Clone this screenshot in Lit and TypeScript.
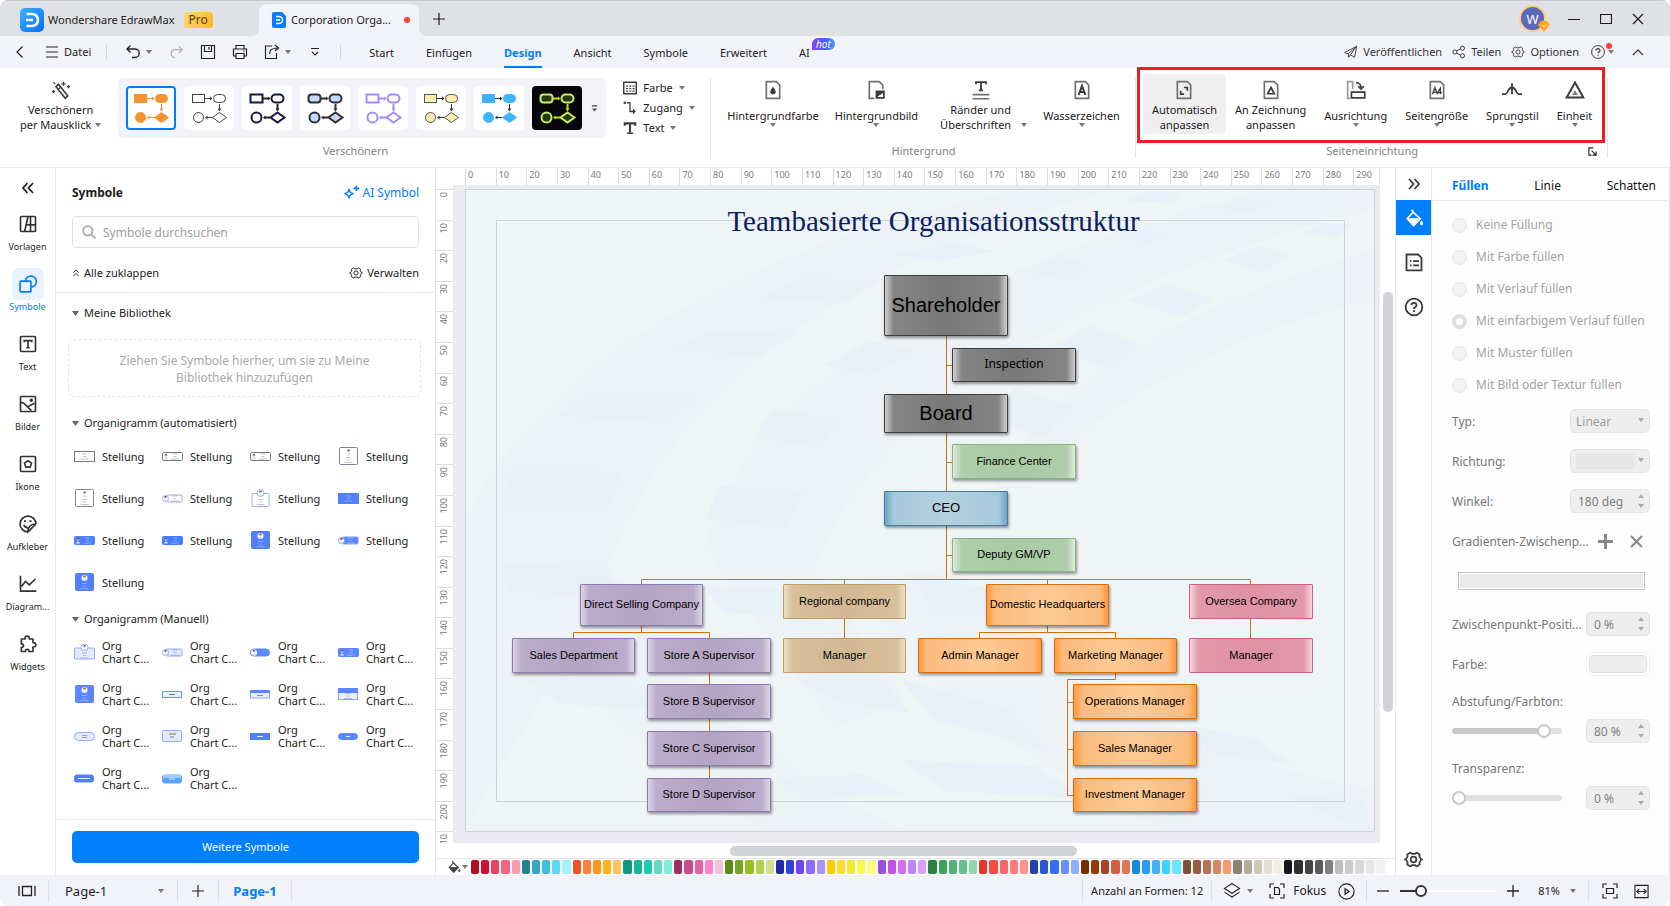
import { LitElement, html, svg, css, nothing, TemplateResult } from "lit";
import { customElement, state } from "lit/decorators.js";
import { classMap } from "lit/directives/class-map.js";
import { styleMap } from "lit/directives/style-map.js";

type Part = TemplateResult<2>;

/** Line icon on a 24-unit grid unless another box is given. */
const icon = (size: number, body: Part, box = "0 0 24 24", extra = "") => html`
  <svg class="ico ${extra}" width=${size} height=${size} viewBox=${box} fill="none" stroke="currentColor" stroke-width="1.6" aria-hidden="true">${body}</svg>
`;
const caret = () => html`<svg class="caret" width="6" height="4" viewBox="0 0 6 4" aria-hidden="true"><path d="M0 0h6L3 4z" fill="currentColor" /></svg>`;

const gear = svg`<path d="M8.200 3.200 10 4.900h4l1.800-1.700 4.100 2.400-.5 2.500 2 3.400 1.600.5-1.600.5-2 3.400.5 2.500-4.100 2.400-1.800-1.700h-4l-1.800 1.700-4.100-2.400.5-2.500-2-3.400L1 12l1.600-.5 2-3.400-.5-2.500z" stroke-linejoin="round"/><circle cx="12" cy="12" r="3.600"/>`;
const page = svg`<path d="M4 2h12l4 4v16H4z" stroke="#707070" stroke-width="2"/>`;
const bucket = svg`<path d="M4 12.500 11 5l8.500 8L11.500 21z" fill="none" stroke-width="2"/><path d="M4 13h15l-7.500 8z" fill="currentColor"/><path d="M9 2l3 4" stroke-width="2"/><path d="M21 16c1.500 2 1.500 3.500 0 4-1.500-.5-1.500-2 0-4z" fill="currentColor"/>`;

const RAIL: { label: string; body: Part }[] = [
  { label: "Vorlagen", body: svg`<rect x="3" y="3" width="18" height="18" rx="1"/><path d="M12 3 8 21M11 13h10M15 3v18" />` },
  { label: "Symbole", body: svg`<rect x="2.500" y="8.500" width="13" height="13" rx="1"/><path d="M9 8.500a6.500 6.500 0 1 1 7 7"/>` },
  { label: "Text", body: svg`<rect x="3" y="3" width="18" height="18" rx="1"/><path d="M7.500 10V8h9v2M12 8v8M10 16.500h4"/>` },
  { label: "Bilder", body: svg`<rect x="3" y="3" width="18" height="18" rx="1"/><path d="m3 10 4 1 9 9M12 15l8-4"/><circle cx="16" cy="7.500" r="1" fill="currentColor"/>` },
  { label: "Ikone", body: svg`<rect x="3" y="3" width="18" height="18" rx="1"/><path d="m12 8 4.200 3-1.600 4.800H9.400L7.800 11z"/>` },
  { label: "Aufkleber", body: svg`<path d="M21.500 12A9.500 9.500 0 1 0 12 21.500M21.500 12 12 21.500c-.5-5 3-10 9.500-9.500M7 13c1 2.500 3 3.500 5 3.500"/><path d="M8.500 7.500v2M15 7.500v2" stroke-width="2.400"/>` },
  { label: "Diagram...", body: svg`<path d="M3 2v18.500h19M4 15l5-6 4.500 4L21 6"/>` },
  { label: "Widgets", body: svg`<path d="M4 6h4.500c-1-4.500 6-4.500 5 0H18v4.500c4.500-1 4.500 6 0 5V21h-5c.8-3.500-4.800-3.500-4 0H4v-5c3.500.8 3.500-4.800 0-4z" stroke-linejoin="round"/>` },
];

/** Ribbon looks of the one-click themes. */
const THEMES = [
  { line: "#f7932e", fill: "#f7932e", arrow: "#f7932e", w: 1, bg: "#fff" },
  { line: "#444", fill: "#fff", arrow: "#444", w: 1, bg: "#fff" },
  { line: "#141a45", fill: "#fff", arrow: "#222", w: 2, bg: "#fff" },
  { line: "#2d3035", fill: "#c5d8fb", arrow: "#2d3035", w: 2, bg: "#fff" },
  { line: "#a48bff", fill: "#fff", arrow: "#a48bff", w: 2, bg: "#fff" },
  { line: "#555", fill: "#fdeeb0", arrow: "#333", w: 1, bg: "#fff" },
  { line: "#3db4ff", fill: "#3db4ff", arrow: "#333", w: 1, bg: "#fff" },
  { line: "#c5ea6f", fill: "#26380a", arrow: "#b6e800", w: 2, bg: "#080509" },
];

const SWATCHES = (
  "b10f1f ce0f35 e8425f f4647f f89cae 26828f 35a8c0 40bfdd 5cd9f0 a4f1ff f15223 ff7f37 ff941b ffb514 ffc459 " +
  "11967f 17b59a 1bccb0 66d8c6 82ecdb 9c2f62 c64c8d e164a8 f985c8 f1c0da 5c8a14 76a329 98be21 b1d14a d0e08e " +
  "1f2aa6 3242d9 6e44f2 8f6cf7 ad90f7 fccb00 fcdc2c f1ea2f fbf64a fdfd7f 994fd9 c44fe3 d270f6 be85fb d89ffd " +
  "2e8044 3aa355 53b077 67c08b 92d7ac e8352b fc4a3f fb6365 ff7b7b ff9289 2442a6 2d57d2 356cf5 668ffc 8ab0f6 " +
  "752e00 933a03 a84327 d16143 e27555 178adb 2a9cf6 41b2ff 3dd2ff 6be6ff 7c5037 965f43 b87253 d78862 f7996c " +
  "8b8074 b3ac9a cdcab8 e4dece f4efdb 151515 303030 444444 5b5b5b 7f7f7f bdbdbd cbcbcb d9d9d9 e6e6e6 f2f2f2 ffffff"
).split(" ");

type Tone = "gray" | "green" | "blue" | "violet" | "tan" | "orange" | "pink";
interface ChartNode { t: string; x: number; y: number; w: number; h: number; tone: Tone; size?: string }
const NODES: ChartNode[] = [
  { t: "Shareholder", x: 419, y: 86, w: 124, h: 61, tone: "gray", size: "big" },
  { t: "Inspection", x: 487, y: 159, w: 124, h: 34, tone: "gray", size: "ui" },
  { t: "Board", x: 419, y: 205, w: 124, h: 39, tone: "gray", size: "big" },
  { t: "Finance Center", x: 487, y: 255, w: 124, h: 35, tone: "green" },
  { t: "CEO", x: 419, y: 302, w: 124, h: 35, tone: "blue", size: "mid" },
  { t: "Deputy GM/VP", x: 487, y: 349, w: 124, h: 34, tone: "green" },
  { t: "Direct Selling Company", x: 115, y: 395, w: 123, h: 42, tone: "violet" },
  { t: "Sales Department", x: 47, y: 449, w: 123, h: 35, tone: "violet" },
  { t: "Store A Supervisor", x: 182, y: 449, w: 124, h: 35, tone: "violet" },
  { t: "Store B Supervisor", x: 182, y: 495, w: 124, h: 35, tone: "violet" },
  { t: "Store C Supervisor", x: 182, y: 542, w: 124, h: 35, tone: "violet" },
  { t: "Store D Supervisor", x: 182, y: 589, w: 124, h: 34, tone: "violet" },
  { t: "Regional company", x: 318, y: 395, w: 123, h: 35, tone: "tan" },
  { t: "Manager", x: 318, y: 449, w: 123, h: 35, tone: "tan" },
  { t: "Domestic Headquarters", x: 521, y: 395, w: 123, h: 42, tone: "orange" },
  { t: "Admin Manager", x: 453, y: 449, w: 124, h: 35, tone: "orange" },
  { t: "Marketing Manager", x: 589, y: 449, w: 123, h: 35, tone: "orange" },
  { t: "Operations Manager", x: 608, y: 495, w: 124, h: 35, tone: "orange" },
  { t: "Sales Manager", x: 608, y: 542, w: 124, h: 35, tone: "orange" },
  { t: "Investment Manager", x: 608, y: 589, w: 124, h: 34, tone: "orange" },
  { t: "Oversea Company", x: 724, y: 395, w: 124, h: 35, tone: "pink" },
  { t: "Manager", x: 724, y: 449, w: 124, h: 35, tone: "pink" },
];

const LINKS =
  "M481.500 147V390.500M481.500 176.500h6M481.500 273.500h6M481.500 366.500h6" +
  "M176.500 395v-4.500h609V395M379.500 390v5M582.500 390v5" +
  "M176.500 437v6.500M108.500 449v-5.500h136v5.500M244.500 484V589M379.500 430v19" +
  "M582.500 437v6.500M514.500 449v-5.500h136v5.500M650.500 484v6.500h-48v116h6M602.500 513.500h6M602.500 560.500h6M785.500 430v19";

const TILES = [
  "127,203 230,203 232,209 197,234 93,227", "247,141 334,146 292,167 205,162", "48,281 158,282 143,317 33,317",
  "334,89 417,91 379,114 296,109", "491,54 529,62 475,72 425,66", "309,219 375,231 355,259 288,249",
  "404,152 450,161 404,187 361,176", "255,297 340,302 322,340 240,330", "702,95 748,110 717,128 665,111",
  "623,136 677,155 642,181 590,157", "793,57 828,67 795,84 760,71", "595,68 627,77 598,91 558,82",
  "548,199 607,216 578,249 535,232", "785,9 813,15 783,23 748,19", "682,2 718,4 708,14 655,12",
  "678,40 703,47 682,54 652,47", "862,34 888,36 872,49 838,44", "33,376 140,371 150,410 45,402",
  "238,398 320,400 345,428 260,424", "330,490 410,480 445,525 372,512", "435,490 545,520 580,560 470,532",
  "718,535 790,550 830,577 750,565", "820,605 900,612 905,640 860,625", "435,571 570,577 620,610 480,602",
  "60,490 150,488 190,520 95,515", "310,590 400,585 440,605 350,610", "450,390 540,400 560,430 470,425",
];

/** Thumbnails: [kind, fill, stroke]. */
type Thumb = [string, string, string];
const AUTO: Thumb[] = [
  ["card", "#fff", "#777"], ["cardP", "#fff", "#777"], ["cardP", "#fff", "#777"], ["tall", "#fff", "#8a78a8"],
  ["tall", "#fff", "#888"], ["tag", "#fff", "#94aefc"], ["badge", "#fff", "#94aefc"], ["card", "#5180ff", "#5180ff"],
  ["cardP", "#5180ff", "#5180ff"], ["cardP", "#447bff", "#447bff"], ["tall", "#5180ff", "#5180ff"], ["tag", "#5a87ff", "#7e9ffb"],
  ["tall", "#5180ff", "#5180ff"],
];
const MANUAL: Thumb[] = [
  ["badge2", "#e4e9fd", "#8faaff"], ["tag", "#e4e9fd", "#8faaff"], ["pillP", "#5a8aff", "#5a8aff"], ["cardP", "#5a87ff", "#5a87ff"],
  ["tall", "#5a87ff", "#5a87ff"], ["slim", "#e9edff", "#6a93fd"], ["head", "#e9edff", "#86a5ff"], ["head2", "#e9edff", "#86a5ff"],
  ["pill", "#e4e9fd", "#8faaff"], ["box", "#e4e9fd", "#8faaff"], ["slim", "#5180ff", "#5180ff"], ["slimPill", "#5a87ff", "#5a87ff"],
  ["slimR", "#5180ff", "#5180ff"], ["gloss", "#5aa4ff", "#5aa4ff"],
];

const face = (cx: number, cy: number) => svg`<circle cx=${cx} cy=${cy - 1} r="1.300" fill="#efc3a4"/><path d="M${cx - 1.500} ${cy - 1.300}q1.500-2.400 3 0z" fill="#443"/><path d="M${cx - 2.200} ${cy + 3}q2.200-4 4.400 0z" fill="#d3d8e6"/>`;
const tinyLines = (cx: number, cy: number, c: string) => svg`<path d="M${cx - 2.500} ${cy - 2.500}h5M${cx - 1.500} ${cy}h3M${cx - 4} ${cy + 2.500}h8" stroke=${c} stroke-width=".7" opacity=".6"/>`;

function thumb([k, fill, line]: Thumb) {
  const ink = fill === "#fff" || fill.startsWith("#e") ? "#777" : "#dfe8ff";
  const r = (x: number, y: number, w: number, h: number, rx = 1) =>
    svg`<rect x=${x} y=${y} width=${w} height=${h} rx=${rx} fill=${fill} stroke=${line}/>`;
  let b: Part;
  switch (k) {
    case "card": b = svg`${r(0.5, 4.5, 20, 10, 0)}${tinyLines(10.5, 9.5, ink)}`; break;
    case "cardP": b = svg`${r(0.5, 5.5, 20, 8)}${face(4, 9.5)}${tinyLines(13, 9.5, ink)}`; break;
    case "tall": b = svg`${r(1.5, 0.5, 18, 17)}<circle cx="10.500" cy="5" r="3" fill="#fff"/>${face(10.5, 5)}${tinyLines(10.5, 13, ink)}`; break;
    case "tag": b = svg`${r(4.5, 6, 15.5, 7)}<circle cx="3.500" cy="9.500" r="3" fill="#fff" stroke=${line}/>${face(3.5, 9.5)}${tinyLines(13, 9.5, ink)}`; break;
    case "badge": b = svg`${r(2, 4.5, 17, 13)}<circle cx="10.500" cy="4" r="3.500" fill="#fff" stroke=${line}/>${face(10.5, 4)}${tinyLines(10.5, 13, ink)}`; break;
    case "badge2": b = svg`${r(0.5, 5, 20, 11)}<circle cx="10.500" cy="4.500" r="3.500" fill="#fff" stroke=${line}/>${face(10.5, 4.5)}${tinyLines(10.5, 12.5, ink)}`; break;
    case "pillP": b = svg`${r(0.5, 6, 19, 7, 3.5)}<circle cx="4" cy="9.500" r="3" fill="#fff"/>${face(4, 9.5)}`; break;
    case "head": b = svg`${r(0.5, 6, 19, 7, 0)}<rect y="5" width="20" height="3" fill="#5a87ff"/><path d="M7 10.500h6" stroke="#888"/>`; break;
    case "head2": b = svg`${r(0.5, 3.5, 19, 11, 0)}<rect y="3" width="20" height="5" fill="#5a87ff"/>${tinyLines(10, 11, ink)}`; break;
    case "pill": b = svg`${r(0.5, 5.5, 20, 8, 4)}<path d="M8 8.500h5M8 10.500h5" stroke="#888" stroke-width=".8"/>`; break;
    case "box": b = svg`${r(0.5, 3.5, 19, 11)}<path d="M7 7h7M8 10h4" stroke="#777" stroke-width="1"/>`; break;
    case "slimPill": b = svg`${r(0.5, 6.5, 19, 6, 3)}<path d="M8 9.500h4" stroke="#dfe8ff"/>`; break;
    case "slimR": b = svg`${r(0.5, 6, 19, 7, 2)}<path d="M4 9.500h12" stroke="#dfe8ff"/>`; break;
    case "gloss": b = svg`${r(0.5, 6, 19, 8, 2)}<path d="M1 6h18v3H1z" fill="#9fceff"/><path d="M7 10h6" stroke="#dfe8ff"/>`; break;
    default: b = svg`${r(0.5, 6.5, 19, 6, 0)}<path d="M7 9.500h6" stroke=${ink}/>`;
  }
  return html`<svg class="thumb" width="21" height="18" viewBox="0 0 21 18" aria-hidden="true">${b}</svg>`;
}

const base = css`
  :host { display: block; font-family: "Noto Sans", "Open Sans", sans-serif; font-size: 11px; line-height: 16px; color: #1a1a1a; }
  * { box-sizing: border-box; }
  button { font: inherit; color: inherit; background: none; border: 0; padding: 0; margin: 0; white-space: nowrap; }
  svg { display: block; flex: none; }
  .caret { color: #777; }
  .grow { flex: 1; }
`;

@customElement("title-bar")
class TitleBar extends LitElement {
  static styles = [base, css`
    .bar { display: flex; height: 36px; background: #e0e1e4; border-top: 1px solid #c6c7ca; padding-left: 20px; align-items: stretch; }
    .brand { display: flex; align-items: center; width: 231px; gap: 4px; color: #222; padding-top: 3px; }
    .pro { background: linear-gradient(120deg, #ffd979, #fdb427); border-radius: 3px; padding: 0 5px; margin-left: 5px; font-size: 12px; color: #5a3b0c; }
    .tabwrap { display: flex; align-items: flex-end; }
    .ear { width: 8px; height: 8px; background: radial-gradient(circle at 0 0, transparent 8px, #f2f3f9 8px); }
    .ear.r { background: radial-gradient(circle at 100% 0, transparent 8px, #f2f3f9 8px); }
    .tab { display: flex; align-items: center; height: 32px; width: 160px; padding: 0 9px 0 13px; gap: 5px; background: #f2f3f9; border-radius: 8px 8px 0 0; white-space: nowrap; }
    .dot { width: 6px; height: 6px; border-radius: 50%; background: #ff3b3b; margin: 0 0 0 auto; }
    .add { width: 24px; display: grid; place-items: center; }
    .right { display: flex; align-items: center; gap: 20px; padding-right: 26px; margin-left: auto; }
    .avatar { position: relative; width: 27px; height: 27px; margin-right: 2px; border: 2px solid #fbcf7d; border-radius: 50%; background: #5d68bd; color: #fff; font-size: 13px; display: grid; place-items: center; }
    .gem { position: absolute; right: -6px; bottom: -2px; }
    .win { display: grid; place-items: center; width: 12px; }
  `];
  render() {
    return html`<header class="bar">
      <div class="brand">
        <svg width="24" height="24" viewBox="0 0 24 24"><defs><linearGradient id="lg" x1="0" y1="0" x2="1" y2="1"><stop stop-color="#38b4ff"/><stop offset="1" stop-color="#0a6cff"/></linearGradient></defs><rect width="24" height="24" rx="5" fill="url(#lg)"/><path d="M6.500 6H12a6 6 0 0 1 0 12H6.500M6 12h7" stroke="#fff" stroke-width="2.600" fill="none"/></svg>
        <span>Wondershare EdrawMax</span><span class="pro">Pro</span>
      </div>
      <div class="tabwrap">
        <i class="ear"></i>
        <div class="tab">
          <svg width="14" height="16" viewBox="0 0 14 16"><path d="M2 0h8l4 4v10a2 2 0 0 1-2 2H2a2 2 0 0 1-2-2V2a2 2 0 0 1 2-2z" fill="#0a7cff"/><path d="M4 4.500h3a3.500 3.500 0 0 1 0 7H4M4 8h4" stroke="#fff" stroke-width="1.500" fill="none"/></svg>
          <span>Corporation Orga...</span><i class="dot"></i>
        </div>
        <i class="ear r"></i>
      </div>
      <button class="add" aria-label="Neuer Tab">${icon(12, svg`<path d="M6 0v12M0 6h12" stroke-width="1.200"/>`, "0 0 12 12")}</button>
      <div class="right">
        <div class="avatar">W<svg class="gem" width="12" height="11" viewBox="0 0 12 11"><path d="M3 0h6l3 4-6 7-6-7z" fill="#ffa81f"/><path d="m4 4 2 2 2-2" stroke="#fff" fill="none"/></svg></div>
        <button class="win" aria-label="Minimieren">${icon(12, svg`<path d="M0 6.500h12" stroke-width="1"/>`, "0 0 12 12")}</button>
        <button class="win" aria-label="Maximieren">${icon(12, svg`<path d="M.5 1.500h11v9H.5z" stroke-width="1.200"/>`, "0 0 12 12")}</button>
        <button class="win" aria-label="Schließen">${icon(12, svg`<path d="m1 1 10 10M11 1 1 11" stroke-width="1.200"/>`, "0 0 12 12")}</button>
      </div>
    </header>`;
  }
}

@customElement("menu-bar")
class MenuBar extends LitElement {
  @state() private active = "Design";
  static styles = [base, css`
    .bar { display: flex; align-items: center; height: 32px; background: #f2f3f9; padding: 0 26px 0 13px; color: #222; }
    .sep { width: 1px; height: 16px; background: #d5d6dc; }
    .file { display: flex; align-items: center; gap: 6px; margin: 0 15px 0 19px; }
    .quick { display: flex; align-items: center; padding: 0 17px 0 18px; }
    .quick button { width: 16px; display: grid; place-items: center; }
    .quick .c { width: 16px; margin-right: 11px; }
    .quick .s { margin-right: 16px; }
    .off { color: #aaa; }
    nav { display: flex; align-self: stretch; margin-left: 12px; }
    nav button { position: relative; padding: 1px 16px 0; }
    nav .on { color: #007bff; font-weight: 700; }
    nav .on::after { content: ""; position: absolute; left: 16px; right: 16px; bottom: 0; height: 2px; background: #007bff; }
    .hot { position: absolute; left: 29px; top: 2px; height: 12px; padding: 0 4px; border-radius: 6px 6px 6px 0; color: #fff; font-size: 10px; font-style: italic; line-height: 12px; background: linear-gradient(90deg, #8a3ffc, #3f63ff 60%, #4a9bff); }
    .right { display: flex; align-items: center; gap: 10px; margin-left: auto; color: #333; }
    .right button { display: flex; align-items: center; gap: 5px; }
    .right .help { position: relative; gap: 3px; margin: 0 8px 0 2px; }
    .help i { position: absolute; left: 15px; top: -2px; width: 6px; height: 6px; border-radius: 50%; background: #ff3b3b; }
  `];
  render() {
    const tabs = ["Start", "Einfügen", "Design", "Ansicht", "Symbole", "Erweitert", "AI"];
    return html`<div class="bar">
      <button aria-label="Zurück">${icon(14, svg`<path d="M9.500 1.500 4 7l5.500 5.500" stroke-width="1.200"/>`, "0 0 14 14")}</button>
      <button class="file">${icon(12, svg`<path d="M0 1h12M0 6h12M0 11h12" stroke-width="1.200"/>`, "0 0 12 12")}Datei</button>
      <i class="sep"></i>
      <div class="quick">
        <button aria-label="Rückgängig">${icon(16, svg`<path d="M5.500 1.500 2 5l3.500 3.500M2 5h8a4 4 0 0 1 0 8.500H7" stroke-width="1.300"/>`, "0 0 16 16")}</button>
        <button class="c" aria-label="Verlauf">${caret()}</button>
        <button class="s off" aria-label="Wiederholen">${icon(15, svg`<path d="M10.500 1.500 14 5l-3.500 3.500M14 5H7a4 4 0 0 0-1 8.500" stroke-width="1.200"/>`, "0 0 16 16")}</button>
        <button class="s" aria-label="Speichern">${icon(16, svg`<path d="M1.500 1.500h13v13h-13zM4.500 2v5.500h7V2M9 3v2.500" stroke-width="1.200"/>`, "0 0 16 16")}</button>
        <button class="s" aria-label="Drucken">${icon(16, svg`<path d="M4 5V1.500h8V5M4 12H1.500V5h13v7H12M4 9.500h8v5H4zM11 7h1.500" stroke-width="1.200"/>`, "0 0 16 16")}</button>
        <button aria-label="Exportieren">${icon(16, svg`<path d="M8 2H1.500v12.500h11V9M5.500 10c0-4 3-6 8-6M11 1l3.500 3L11 7" stroke-width="1.200"/>`, "0 0 16 16")}</button>
        <button class="c" aria-label="Mehr Export">${caret()}</button>
        <button aria-label="Anpassen">${icon(10, svg`<path d="M1 1.500h8M2 5l3 3 3-3" stroke-width="1.200"/>`, "0 0 10 10")}</button>
      </div>
      <i class="sep"></i>
      <nav>${tabs.map((t) => html`<button class=${classMap({ on: t === this.active })} @click=${() => (this.active = t)}>${t}${t === "AI" ? html`<span class="hot">hot</span>` : nothing}</button>`)}</nav>
      <div class="right">
        <button>${icon(14, svg`<path d="M1 13 22 2l-4 19-7-4 9-13L7 15zM11 17l-3 4v-6" stroke-width="1.500" stroke-linejoin="round"/>`)}Veröffentlichen</button>
        <button>${icon(14, svg`<circle cx="5" cy="12" r="3.500"/><circle cx="18" cy="5.500" r="3.500"/><circle cx="18" cy="18.500" r="3.500"/><path d="m8 10 7-3.500M8 14l7 3.500"/>`)}Teilen</button>
        <button>${icon(14, gear)}Optionen</button>
        <button class="help" aria-label="Hilfe">${icon(14, svg`<circle cx="12" cy="12" r="11"/><path d="M8.500 9.500c0-4.500 7-4 7 0 0 2.500-3.500 2.500-3.500 5M12 16.500v2" stroke-width="2"/>`)}<i></i>${caret()}</button>
        <button aria-label="Menüband reduzieren">${icon(12, svg`<path d="m1 9 5-5 5 5" stroke-width="1.200"/>`, "0 0 12 12")}</button>
      </div>
    </div>`;
  }
}

@customElement("ribbon-bar")
class RibbonBar extends LitElement {
  @state() private theme = 0;
  static styles = [base, css`
    .bar { display: flex; height: 99px; background: #fff; padding-top: 6px; }
    .group { position: relative; display: flex; flex-direction: column; }
    .group::after { content: ""; position: absolute; right: 0; top: 4px; height: 80px; width: 1px; background: #e6e6ea; }
    .body { display: flex; height: 60px; padding: 0 8px; }
    .cap { margin-top: 9px; text-align: center; color: #828282; }
    .big { display: flex; flex-direction: column; align-items: center; height: 60px; padding: 6px 8px 0; border-radius: 4px; line-height: 15px; }
    .setup .body { padding: 0 7px; }
    .setup .big { padding: 6px 9px 0; }
    .big .lab { display: flex; flex-direction: column; align-items: center; margin-top: 2px; }
    .big.one .lab { margin-top: 8px; }
    .line2 { display: flex; align-items: center; gap: 4px; }
    .line2.far { gap: 10px; padding-left: 6px; }
    .press { background: #efefef; }
    .first { margin: 0 9px 0 4px; }
    .gallery { display: flex; align-items: center; gap: 8px; height: 60px; padding: 0 8px; margin-top: 4px; border-radius: 6px; background: #f2f3f9; }
    .card { width: 50px; height: 44px; border-radius: 4px; overflow: hidden; }
    .card.on { box-shadow: 0 0 0 2px #007bff inset; }
    .more { width: 8px; display: grid; place-items: center; color: #555; }
    .list { display: flex; flex-direction: column; margin-left: 17px; width: 80px; padding-top: 4px; }
    .list button { display: flex; flex: none; align-items: center; height: 20px; gap: 6px; }
    .mark { position: absolute; left: 1px; right: 3px; top: -7px; height: 76px; border: 3px solid #ee1c25; pointer-events: none; }
    .launch { position: absolute; right: 11px; top: 73px; }
    .dark { color: #3c3c3c; }
  `];
  big(label: string, body: Part, opts: { two?: string; press?: boolean; far?: boolean; drop?: boolean } = {}) {
    const one = !opts.two;
    return html`<button class=${classMap({ big: true, one, press: !!opts.press })}>
      ${icon(20, body, "0 0 24 24", "dark")}
      <span class="lab"><span>${label}</span>${one ? caret() : html`<span class=${classMap({ line2: true, far: !!opts.far })}>${opts.two}${opts.drop ? caret() : nothing}</span>`}</span>
    </button>`;
  }
  card(i: number) {
    const t = THEMES[i];
    const rounded = i === 3 || i === 7 ? 3 : 0;
    return html`<button class=${classMap({ card: true, on: i === this.theme })} aria-label="Thema ${i + 1}" @click=${() => (this.theme = i)} style=${styleMap({ backgroundColor: t.bg })}>
      <svg width="50" height="44" viewBox="0 0 50 44">
        <g fill=${t.fill} stroke=${t.line} stroke-width=${t.w}>
          <rect x="8.500" y="8.500" width="12" height="8" rx=${rounded}/><rect x="29.500" y="8.500" width="12" height="8" rx="4"/>
          <circle cx="14.500" cy="31.500" r="5"/><path d="m35.500 26.500 7 5-7 5-7-5z"/>
        </g>
        <g stroke=${t.arrow} stroke-width=${t.w} fill=${t.arrow}><path d="M21 12.500h6M35.500 18v5M28 31.500h-5"/><path d="m26 10.500 2.500 2-2.500 2zM33.500 22.500l2 3 2-3zM23.500 29.500l-2.500 2 2.500 2z" stroke="none"/></g>
      </svg></button>`;
  }
  render() {
    return html`<section class="bar">
      <div class="group">
        <div class="body">
          <div class="first">${this.big("Verschönern", svg`<path d="m6 8 3-3 11 14-3 3z" stroke-width="2"/><path d="M15 2v5M12.500 4.500h5M21 6v4M19 8h4M3 12v4M1 14h4M3 3l2 2M11 9l-2 2" stroke-width="1.500"/>`, { two: "per Mausklick", drop: true })}</div>
          <div class="gallery">${THEMES.map((_, i) => this.card(i))}<button class="more" aria-label="Weitere Themen">${icon(7, svg`<path d="M1 1h6"/><path d="M1 4h6L4 7.500z" fill="currentColor" stroke="none"/>`, "0 0 8 8")}</button></div>
          <div class="list">
            <button>${icon(14, svg`<path d="M1 2h20v18H1z" stroke-width="2.600"/><path d="M5 8h3M10 8h3M15 8h3M5 12h3M10 12h3M15 12h3M5 16h3M10 16h3M15 16h3" stroke-width="2"/>`, "0 0 22 22", "dark")}Farbe ${caret()}</button>
            <button>${icon(14, svg`<path d="M7 3h5v15h6" stroke-width="2.200"/><circle cx="3" cy="3" r="2.200" fill="currentColor" stroke="none"/><path d="m17 13 5 5-5 5z" fill="currentColor" stroke="none"/>`, "0 0 24 24", "dark")}Zugang ${caret()}</button>
            <button>${icon(14, svg`<path d="M3 8V4h18v4M12 4v16" stroke-width="3.600"/><path d="M7 21h10" stroke-width="2.600"/>`, "0 0 24 24", "dark")}Text ${caret()}</button>
          </div>
        </div>
        <div class="cap">Verschönern</div>
      </div>
      <div class="group">
        <div class="body">
          ${this.big("Hintergrundfarbe", svg`${page}<path d="M12 8c5 6 3.500 9 0 9s-5-3 0-9z" fill="currentColor" stroke="none"/>`)}
          ${this.big("Hintergrundbild", svg`<path d="M10 22H4V2h12l4 4v5" stroke="#707070" stroke-width="2"/><path d="M12.500 13.500h9v8h-9z" stroke-width="2"/><path d="m13 14h8l-4 3-2 1-2 2z" fill="currentColor"/>`)}
          ${this.big("Ränder und", svg`<path d="M6 5V2.500h12V5M12 2.500V12M9.500 12.500h5" stroke-width="2.200"/><path d="M2 17.500h20M2 22.500h20" stroke="#707070" stroke-width="2"/>`, { two: "Überschriften", drop: true, far: true })}
          ${this.big("Wasserzeichen", svg`${page}<path d="m8 18 4-11 4 11M9.500 14.500h5" stroke-width="2.400"/>`)}
        </div>
        <div class="cap">Hintergrund</div>
      </div>
      <div class="group setup">
        <div class="body">
          ${this.big("Automatisch", svg`${page}<path d="M12 9h4v4M12 17H8v-4" stroke-width="2"/>`, { two: "anpassen", press: true })}
          ${this.big("An Zeichnung", svg`${page}<path d="m12 9 4 7.500H8z" stroke-width="2"/>`, { two: "anpassen" })}
          ${this.big("Ausrichtung", svg`<path d="M8 11V2H2v20h3" stroke="#999" stroke-width="2"/><path d="M6.500 14.500h16v7h-16z" stroke-width="2"/><path d="M12 3c4 0 6 2 6 7M14.500 7.500l3.500 3.500 3.500-3.500" stroke-width="2"/>`)}
          ${this.big("Seitengröße", svg`${page}<path d="m6.500 17 3-8 3 8M7.500 14.500h4M16 17v-7l-3 5h5" stroke-width="1.500"/>`)}
          ${this.big("Sprungstil", svg`<path d="M0 17h4c3 0 3-8 8-8s5 8 8 8h4M12 4v13" stroke-width="2.200"/>`)}
          ${this.big("Einheit", svg`<path d="m12 3 10 18H2z" stroke-width="2.400"/><path d="m12 12 3.500 6h-7z" fill="#808080" stroke="none"/>`)}
        </div>
        <div class="cap">Seiteneinrichtung</div>
        <button class="launch" aria-label="Seiteneinrichtung öffnen">${icon(9, svg`<path d="M6 1H1v8h3M4 4l5 5M9 5v4H5" stroke-width="1.200"/>`, "0 0 10 10")}</button>
        <div class="mark"></div>
      </div>
    </section>`;
  }
}

@customElement("symbol-panel")
class SymbolPanel extends LitElement {
  @state() private active = "Symbole";
  static styles = [base, css`
    :host { display: flex; flex: none; background: #fff; border-right: 1px solid #e3e4e8; }
    .rail { width: 56px; display: flex; flex-direction: column; align-items: center; border-right: 1px solid #e6e7ec; padding-top: 10px; }
    .rail button { display: flex; flex-direction: column; align-items: center; height: 60px; font-size: 9px; line-height: 14px; width: 54px; color: #222; }
    .rail .box { width: 32px; height: 32px; display: grid; place-items: center; border-radius: 6px; color: #333; }
    .rail .on { color: #007bff; }
    .rail .on .box { background: #e8f3ff; color: #007bff; }
    .rail .fold { height: 20px; margin-bottom: 10px; justify-content: center; }
    .panel { width: 379px; display: flex; flex-direction: column; }
    .top { padding: 16px 16px 10px; border-bottom: 1px solid #e8e9ec; }
    .top b { font-size: 12px; }
    .between { display: flex; justify-content: space-between; align-items: center; height: 18px; }
    .blue { color: #007bff; display: flex; gap: 3px; align-items: center; font-size: 12px; }
    .tool { display: flex; gap: 4px; align-items: center; }
    .search { display: flex; align-items: center; gap: 7px; height: 32px; margin: 14px 0 16px; padding: 0 9px; border: 1px solid #e0e0e3; border-radius: 5px; color: #a8a8a8; }
    .search input { flex: 1; min-width: 0; border: 0; outline: 0; font: inherit; font-size: 12px; background: none; padding: 2px 0 0; }
    .search input::placeholder { color: #a0a0a0; opacity: 1; }
    .scroll { flex: 1; min-height: 0; overflow: hidden; padding: 12px 0 0 16px; }
    .head { display: flex; align-items: center; gap: 5px; height: 16px; }
    .drop { margin: 18px 14px 18px -4px; height: 58px; border: 1px dashed #e3e4e6; border-radius: 6px; color: #a8a8a8; font-size: 12px; line-height: 17px; text-align: center; padding: 12px 40px; }
    .grid { display: grid; grid-template-columns: repeat(4, 88px); padding-left: 1px; margin: 4px 0 8px; }
    .grid button { display: flex; align-items: center; gap: 7px; height: 42px; text-align: left; line-height: 13px; padding-left: 1px; }
    .foot { border-top: 1px solid #e8e9ec; padding: 11px 16px 12px; }
    .cta { width: 100%; height: 32px; border-radius: 5px; background: #007fff; color: #fff; }
  `];
  render() {
    return html`
      <aside class="rail">
        <button class="fold" aria-label="Einklappen">${icon(14, svg`<path d="M6.500 2 2 7l4.500 5M12 2 7.500 7l4.500 5" stroke-width="1.800"/>`, "0 0 14 14")}</button>
        ${RAIL.map((r) => html`<button class=${classMap({ on: r.label === this.active })} @click=${() => (this.active = r.label)}><span class="box">${icon(20, svg`<g stroke-width="2">${r.body}</g>`)}</span>${r.label}</button>`)}
      </aside>
      <section class="panel">
        <div class="top">
          <div class="between"><b>Symbole</b><button class="blue">${icon(16, svg`<path d="M9 6c1 5 2 6 7 7-5 1-6 2-7 7-1-5-2-6-7-7 5-1 6-2 7-7z" stroke-width="2"/><path d="M20 1v8M16 5h8" stroke-width="2.400"/>`)}AI Symbol</button></div>
          <label class="search">${icon(14, svg`<circle cx="10" cy="10" r="8" stroke-width="3"/><path d="m16 16 7 7" stroke-width="3"/>`)}<input type="text" placeholder="Symbole durchsuchen" aria-label="Symbole durchsuchen" /></label>
          <div class="between"><button class="tool">${icon(8, svg`<path d="m1 4 3-3 3 3M1 8l3-3 3 3" stroke-width="1.100"/>`, "0 0 8 9")}Alle zuklappen</button><button class="tool">${icon(14, gear)}Verwalten</button></div>
        </div>
        <div class="scroll">
          <button class="head">${this.mark()}Meine Bibliothek</button>
          <div class="drop">Ziehen Sie Symbole hierher, um sie zu Meine Bibliothek hinzuzufügen</div>
          <button class="head">${this.mark()}Organigramm (automatisiert)</button>
          <div class="grid">${AUTO.map((t) => html`<button>${thumb(t)}Stellung</button>`)}</div>
          <button class="head">${this.mark()}Organigramm (Manuell)</button>
          <div class="grid">${MANUAL.map((t) => html`<button>${thumb(t)}<span>Org<br />Chart C...</span></button>`)}</div>
        </div>
        <div class="foot"><button class="cta">Weitere Symbole</button></div>
      </section>`;
  }
  mark() {
    return html`<svg width="7" height="5" viewBox="0 0 7 5"><path d="M0 0h7L3.500 5z" fill="#666"/></svg>`;
  }
}

@customElement("drawing-area")
class DrawingArea extends LitElement {
  static styles = [base, css`
    :host { display: grid; flex: 1; min-width: 0; grid-template: 17px minmax(0, 1fr) 15px 17px / 17px minmax(0, 1fr) 15px; background: #fff; }
    .hr { grid-area: 1 / 1 / 2 / 3; overflow: hidden; padding-left: 29px; border-right: 1px solid #e6e7ec; }
    .hr .cells { display: grid; grid-template-columns: repeat(30, 1fr); width: 919px; height: 17px; }
    .vr { grid-area: 2 / 1 / 3 / 2; overflow: hidden; padding-top: 4px; min-height: 0; }
    .vr .cells { display: grid; grid-template-rows: repeat(22, 1fr); height: 673px; }
    .cells span { border-left: 1px solid #dcdde1; font-size: 9px; line-height: 14px; padding-left: 2px; color: #7a7a7a; }
    .vr .cells span { border-left: 0; border-top: 1px solid #dcdde1; padding: 2px 0 0 1px; }
    .vr i { display: block; font-style: normal; writing-mode: vertical-rl; rotate: 180deg; width: 13px; line-height: 13px; text-align: right; }
    .view { grid-area: 2 / 2 / 3 / 3; overflow: hidden; background: #eaeaf0; padding: 4px 0 0 12px; }
    .sheet { position: relative; width: 910px; height: 643px; border: 1px solid #ccd1d5; background: #eff4f7; overflow: hidden; }
    .sheet > svg { position: absolute; left: -1px; top: -1px; }
    .title { position: absolute; left: 0; right: -27px; top: 15px; margin: 0; text-align: center; font: 400 29px/32px "Liberation Serif", serif; color: #0a1f62; }
    .node { position: absolute; display: grid; place-items: center; border: 1px solid; border-radius: 1px; padding-bottom: 2px; color: #000; font: 11px/14px "Liberation Sans", sans-serif; white-space: nowrap; translate: -1px -1px; background: linear-gradient(90deg, var(--e), var(--m) 7%, var(--c) 50%, var(--m) 93%, var(--e)); border-color: var(--b); box-shadow: 1px 2px 3px rgba(0, 0, 0, 0.4); }
    .big { font-size: 20px; line-height: 22px; }
    .mid { font-size: 13px; }
    .ui { font-family: "Noto Sans", sans-serif; font-size: 12px; }
    .gray { --e: #cfcfcf; --m: #858585; --c: #787878; --b: #3d3d3d; }
    .green { --e: #dfecdc; --m: #aecda9; --c: #a9caa4; --b: #84b57f; }
    .blue { --e: #6fa6c6; --m: #a6c8db; --c: #b5d0df; --b: #3a80a6; }
    .violet { --e: #dcd5e5; --m: #baacca; --c: #b3a4c3; --b: #9079ac; }
    .tan { --e: #eadfc9; --m: #d7c09b; --c: #d2b892; --b: #c49a5e; box-shadow: none; }
    .orange { --e: #ff9a3c; --m: #fabb7e; --c: #fcca96; --b: #d86f0c; }
    .pink { --e: #f6d3dd; --m: #e298ab; --c: #df91a5; --b: #d0607f; box-shadow: none; }
    .vs { grid-area: 1 / 3 / 4 / 4; padding: 124px 2px 0 3px; }
    .vs i { display: block; height: 420px; border-radius: 5px; background: #d1d2d5; }
    .hs { grid-area: 3 / 1 / 4 / 3; padding: 3px 303px 2px 294px; }
    .hs i { display: block; height: 10px; border-radius: 5px; background: #d1d2d5; }
    .pal { grid-area: 4 / 1 / 5 / 4; display: flex; align-items: stretch; border-top: 1px solid #e6e7ec; padding: 1px 1px 1px 11px; }
    .pick { display: flex; align-items: center; width: 24px; gap: 1px; color: #444; }
    .sw { flex: 1; display: grid; grid-template-columns: repeat(91, 1fr); gap: 2px; background: #f7f7fb; }
    .sw button { border-radius: 2px; }
  `];
  render() {
    const ticks = (n: number) => Array.from({ length: n }, (_, i) => i * 10);
    return html`
      <div class="hr"><div class="cells">${ticks(30).map((t) => html`<span>${t}</span>`)}</div></div>
      <div class="vr"><div class="cells">${ticks(22).map((t) => html`<span><i>${t}</i></span>`)}</div></div>
      <main class="view">
        <div class="sheet">
          <svg width="911" height="643" viewBox="0 0 911 643" fill="none">
            <g fill="#edf2f6">
              <path d="M0 330C70 190 250 60 560 0h90C400 70 190 190 130 420L0 640z"/>
              <path d="M240 360C270 220 450 90 800 0h110v20C620 90 400 230 350 380l90 130-70 30z"/>
              <path d="M530 300C560 220 700 120 910 60v50C740 150 620 230 570 290z"/>
              <path d="M140 370c60 110 150 200 300 272H300C180 570 90 480 40 400z"/>
              <path d="M480 380c120 110 250 190 430 220v42H700C560 570 420 480 400 390z"/>
            </g>
            <g fill="#e9f1f8">${TILES.map((p) => svg`<polygon points=${p}/>`)}</g>
            <path d="M31.500 31.500h848v581h-848z" stroke="#ccd2d6"/>
            <path d=${LINKS} stroke="#d0700f"/>
          </svg>
          <h1 class="title">Teambasierte Organisationsstruktur</h1>
          ${NODES.map((n) => html`<div class="node ${n.tone} ${n.size ?? ""}" style=${styleMap({ left: `${n.x}px`, top: `${n.y}px`, width: `${n.w}px`, height: `${n.h}px` })}>${n.t}</div>`)}
        </div>
      </main>
      <div class="vs"><i></i></div>
      <div class="hs"><i></i></div>
      <div class="pal">
        <button class="pick" aria-label="Füllfarbe">${icon(14, bucket)}${caret()}</button>
        <div class="sw">${SWATCHES.map((c) => html`<button aria-label="#${c}" style=${styleMap({ backgroundColor: `#${c}` })}></button>`)}</div>
      </div>`;
  }
}

@customElement("format-panel")
class FormatPanel extends LitElement {
  static styles = [base, css`
    :host { display: flex; flex: none; background: #fdfdfe; }
    .rail { width: 37px; display: flex; flex-direction: column; align-items: center; border: solid #e6e7ec; border-width: 0 1px; color: #3c3c3c; background: #fff; padding-bottom: 6px; }
    .rail button { width: 35px; height: 35px; display: grid; place-items: center; }
    .rail .fold { height: 32px; }
    .rail .on { background: #007fff; color: #fff; margin-bottom: 9px; }
    .rail .gap { margin-bottom: 10px; }
    .rail .end { margin-top: auto; height: 20px; }
    .panel { width: 238px; border-right: 1px solid #e3e4e8; }
    .tabs { display: flex; justify-content: space-between; height: 33px; padding: 3px 13px 0 20px; border-bottom: 1px solid #e6e7ec; color: #111; background: #fff; font-size: 12px; }
    .tabs .on { color: #007bff; font-weight: 700; }
    .form { padding: 8px 19px 0 20px; color: #777; font-size: 12px; }
    .radio { display: flex; align-items: center; gap: 9px; height: 32px; color: #a3a3a3; white-space: nowrap; }
    .radio input { appearance: none; flex: none; width: 15px; height: 15px; margin: 0; border: 1px solid #e4e4e4; border-radius: 50%; background: #f2f2f2; }
    .radio input:checked { border: 4px solid #dedede; background: #fff; }
    .line { display: flex; align-items: center; justify-content: space-between; height: 40px; }
    .line.text { height: 34px; }
    .line.slide { height: 26px; margin-bottom: 7px; }
    .line label, .line .lab { white-space: nowrap; padding-top: 2px; }
    .ctl { position: relative; display: flex; flex: none; align-items: center; height: 24px; width: 80px; border: 1px solid #e3e3e3; border-radius: 5px; background: #eee; color: #777; }
    .ctl.sm { width: 64px; }
    .ctl .caret, .spin { position: absolute; right: 5px; color: #aaa; }
    .ctl .caret { top: 8px; }
    .ctl .spin .caret { position: static; }
    .spin { top: 4px; display: grid; gap: 6px; }
    .spin .up { rotate: 180deg; }
    .ctl select, .ctl input { appearance: none; width: 100%; border: 0; background: none; font: inherit; font-size: 12px; color: #808080; padding: 1px 0 0 7px; opacity: 1; }
    .ctl select { color: #9c9c9c; padding-left: 5px; }
    .blank { width: 58px; height: 15px; margin-left: 5px; background: #e6e6e6; position: absolute; left: 0; pointer-events: none; }
    .acts { display: flex; gap: 16px; padding-right: 6px; color: #888; }
    .grad { height: 18px; margin: 11px 5px 14px 6px; border: 1px solid #c4c4c4; background: #eaeaea; box-shadow: 0 0 0 1px #fff inset; }
    .color { width: 64px; height: 24px; border: 1px solid #eee; border-radius: 6px; background: #fff; padding: 2px; }
    .color i { display: block; height: 18px; border: 1px solid #e0e0e0; border-radius: 4px; background: #eee; }
    input[type="range"] { appearance: none; width: 110px; height: 14px; margin: 0; background: none; }
    input[type="range"]::-webkit-slider-runnable-track { height: 6px; border-radius: 3px; background: linear-gradient(90deg, #c9c9c9 var(--v), #dfdfdf var(--v)); }
    input[type="range"]::-webkit-slider-thumb { appearance: none; width: 14px; height: 14px; margin-top: -4px; border: 2px solid #c9c9c9; border-radius: 50%; background: #fff; }
  `];
  spin(id: string, value: string, small = true) {
    return html`<span class=${classMap({ ctl: true, sm: small })}><input id=${id} aria-label=${id} .value=${value} disabled /><span class="spin"><span class="up">${caret()}</span>${caret()}</span></span>`;
  }
  render() {
    const fills = ["Keine Füllung", "Mit Farbe füllen", "Mit Verlauf füllen", "Mit einfarbigem Verlauf füllen", "Mit Muster füllen", "Mit Bild oder Textur füllen"];
    return html`
      <aside class="rail">
        <button class="fold" aria-label="Ausklappen">${icon(14, svg`<path d="m2 2 4.500 5L2 12M7.500 2l4.500 5-4.500 5" stroke-width="1.800"/>`, "0 0 14 14")}</button>
        <button class="on" aria-label="Füllen">${icon(20, bucket)}</button>
        <button class="gap" aria-label="Eigenschaften">${icon(20, svg`<path d="M3 3h14l4 4v15H3z" stroke-width="2.200"/><path d="M7 11h2M11 11h7M7 16h2M11 16h7" stroke-width="2"/>`)}</button>
        <button aria-label="Hilfe">${icon(20, svg`<circle cx="12" cy="12" r="10" stroke-width="2.200"/><path d="M9 10c0-4 6-4 6 0 0 2-3 2-3 4.500M12 16v2" stroke-width="2.200"/>`)}</button>
        <button class="end" aria-label="Einstellungen">${icon(19, svg`<g stroke-width="2.200">${gear}</g>`)}</button>
      </aside>
      <section class="panel">
        <div class="tabs"><button class="on">Füllen</button><button>Linie</button><button>Schatten</button></div>
        <div class="form">
          ${fills.map((f, i) => html`<label class="radio"><input type="radio" name="fill" disabled ?checked=${i === 3} />${f}</label>`)}
          <div class="line"><label for="typ">Typ:</label><span class="ctl"><select id="typ" disabled><option>Linear</option></select>${caret()}</span></div>
          <div class="line"><label for="dir">Richtung:</label><span class="ctl"><select id="dir" disabled></select><i class="blank"></i>${caret()}</span></div>
          <div class="line"><label for="ang">Winkel:</label>${this.spin("ang", "180 deg", false)}</div>
          <div class="line"><span class="lab">Gradienten-Zwischenp...</span><span class="acts">${icon(15, svg`<path d="M7.500 0v15M0 7.500h15" stroke-width="3"/>`, "0 0 15 15")}${icon(15, svg`<path d="m2 2 11 11M13 2 2 13" stroke-width="2"/>`, "0 0 15 15")}</span></div>
          <div class="grad"></div>
          <div class="line"><label for="pos">Zwischenpunkt-Positi...</label>${this.spin("pos", "0 %")}</div>
          <div class="line"><span class="lab">Farbe:</span><button class="color" aria-label="Farbe" disabled><i></i></button></div>
          <div class="line text"><label for="tone">Abstufung/Farbton:</label></div>
          <div class="line slide"><input id="tone" type="range" disabled .value=${"89"} style="--v: 86%" />${this.spin("tonev", "80 %")}</div>
          <div class="line text"><label for="alpha">Transparenz:</label></div>
          <div class="line slide"><input id="alpha" type="range" disabled .value=${"0"} style="--v: 0%" />${this.spin("alphav", "0 %")}</div>
        </div>
      </section>`;
  }
}

@customElement("status-bar")
class StatusBar extends LitElement {
  static styles = [base, css`
    .bar { display: flex; align-items: center; height: 31px; padding-top: 1px; background: #f2f3f9; color: #222; }
    .sep { width: 1px; height: 22px; background: #dfe0e6; }
    .views { width: 48px; padding-left: 18px; }
    .pages { position: relative; width: 128px; }
    .pages select { appearance: none; border: 0; background: none; font: inherit; font-size: 13px; width: 100%; padding: 0 0 0 16px; color: #222; }
    .pages .caret { position: absolute; right: 13px; top: 6px; }
    .add { width: 40px; display: grid; place-items: center; }
    .cur { width: 72px; color: #007bff; font-weight: 700; font-size: 13px; }
    .count { padding: 0 8px; }
    .tools { display: flex; align-items: center; gap: 8px; padding: 0 11px; }
    .tools .layer { display: flex; align-items: center; gap: 6px; margin-right: 8px; }
    .focus { display: flex; align-items: center; gap: 8px; margin-right: 4px; font-size: 12px; }
    .zoom { display: flex; align-items: center; gap: 11px; padding: 0 12px 0 10px; }
    .pct { display: flex; align-items: center; gap: 10px; margin-left: 8px; }
    .fit { display: flex; gap: 16px; padding: 0 21px 0 13px; }
    input { appearance: none; width: 96px; height: 12px; margin: 0; background: none; }
    input::-webkit-slider-runnable-track { height: 2px; background: linear-gradient(90deg, #333 var(--v), #fff var(--v)); }
    input::-webkit-slider-thumb { appearance: none; width: 12px; height: 12px; margin-top: -5px; border: 2px solid #333; border-radius: 50%; background: #fff; }
  `];
  render() {
    const b = (s: number, body: Part, box?: string) => icon(s, body, box);
    return html`<footer class="bar">
      <button class="views" aria-label="Seitenansicht">${b(18, svg`<path d="M4.500 4.500h9v9h-9zM1 4v10M17 4v10" stroke-width="1.300"/>`, "0 0 18 18")}</button><i class="sep"></i>
      <div class="pages"><select aria-label="Seite"><option>Page-1</option></select>${caret()}</div><i class="sep"></i>
      <button class="add" aria-label="Seite hinzufügen">${b(12, svg`<path d="M6 0v12M0 6h12" stroke-width="1.200"/>`, "0 0 12 12")}</button><i class="sep"></i>
      <button class="cur">Page-1</button><i class="sep"></i>
      <span class="grow"></span><i class="sep"></i>
      <span class="count">Anzahl an Formen: 12</span><i class="sep"></i>
      <div class="tools">
        <button class="layer" aria-label="Ebenen">${b(18, svg`<path d="m12 2 10 6.500L12 15 2 8.500zM2 13.500 12 20l10-6.500" stroke-width="1.500"/>`)}${caret()}</button>
        <button class="focus">${b(16, svg`<path d="M5 1H1v4M11 1h4v4M5 15H1v-4M11 15h4v-4M5.500 4.500H9L10.500 6v5.500h-5z" stroke-width="1.200"/>`, "0 0 16 16")}Fokus</button>
        <button aria-label="Präsentieren">${b(17, svg`<circle cx="12" cy="12" r="10.800"/><path d="m10 8 5.500 4-5.500 4z" stroke-width="1.800"/>`)}</button>
      </div><i class="sep"></i>
      <div class="zoom">
        <button aria-label="Verkleinern">${b(12, svg`<path d="M0 6h12" stroke-width="1.300"/>`, "0 0 12 12")}</button>
        <input type="range" aria-label="Zoom" .value=${"18"} style="--v: 20%" />
        <button aria-label="Vergrößern">${b(12, svg`<path d="M6 0v12M0 6h12" stroke-width="1.300"/>`, "0 0 12 12")}</button>
        <button class="pct">81% ${caret()}</button>
      </div><i class="sep"></i>
      <div class="fit">
        <button aria-label="Seite einpassen">${b(16, svg`<path d="M5 1H1v4M11 1h4v4M5 15H1v-4M11 15h4v-4M4.500 5.500h7v5h-7z" stroke-width="1.200"/>`, "0 0 16 16")}</button>
        <button aria-label="Breite einpassen">${b(15, svg`<path d="M1 1.500h14v13H1zM3 8h10M5.500 5.500 3 8l2.500 2.500M10.500 5.500 13 8l-2.500 2.500" stroke-width="1.200"/>`, "0 0 16 16")}</button>
      </div>
    </footer>`;
  }
}

@customElement("app-root")
class AppRoot extends LitElement {
  static styles = css`
    :host { display: block; background: #fff; }
    .window { display: flex; flex-direction: column; height: 100vh; border-radius: 8px; overflow: hidden; }
    .work { display: flex; flex: 1; min-height: 0; border-top: 1px solid #e6e7ec; }
  `;
  render() {
    return html`<div class="window">
      <title-bar></title-bar><menu-bar></menu-bar><ribbon-bar></ribbon-bar>
      <div class="work"><symbol-panel></symbol-panel><drawing-area></drawing-area><format-panel></format-panel></div>
      <status-bar></status-bar>
    </div>`;
  }
}
